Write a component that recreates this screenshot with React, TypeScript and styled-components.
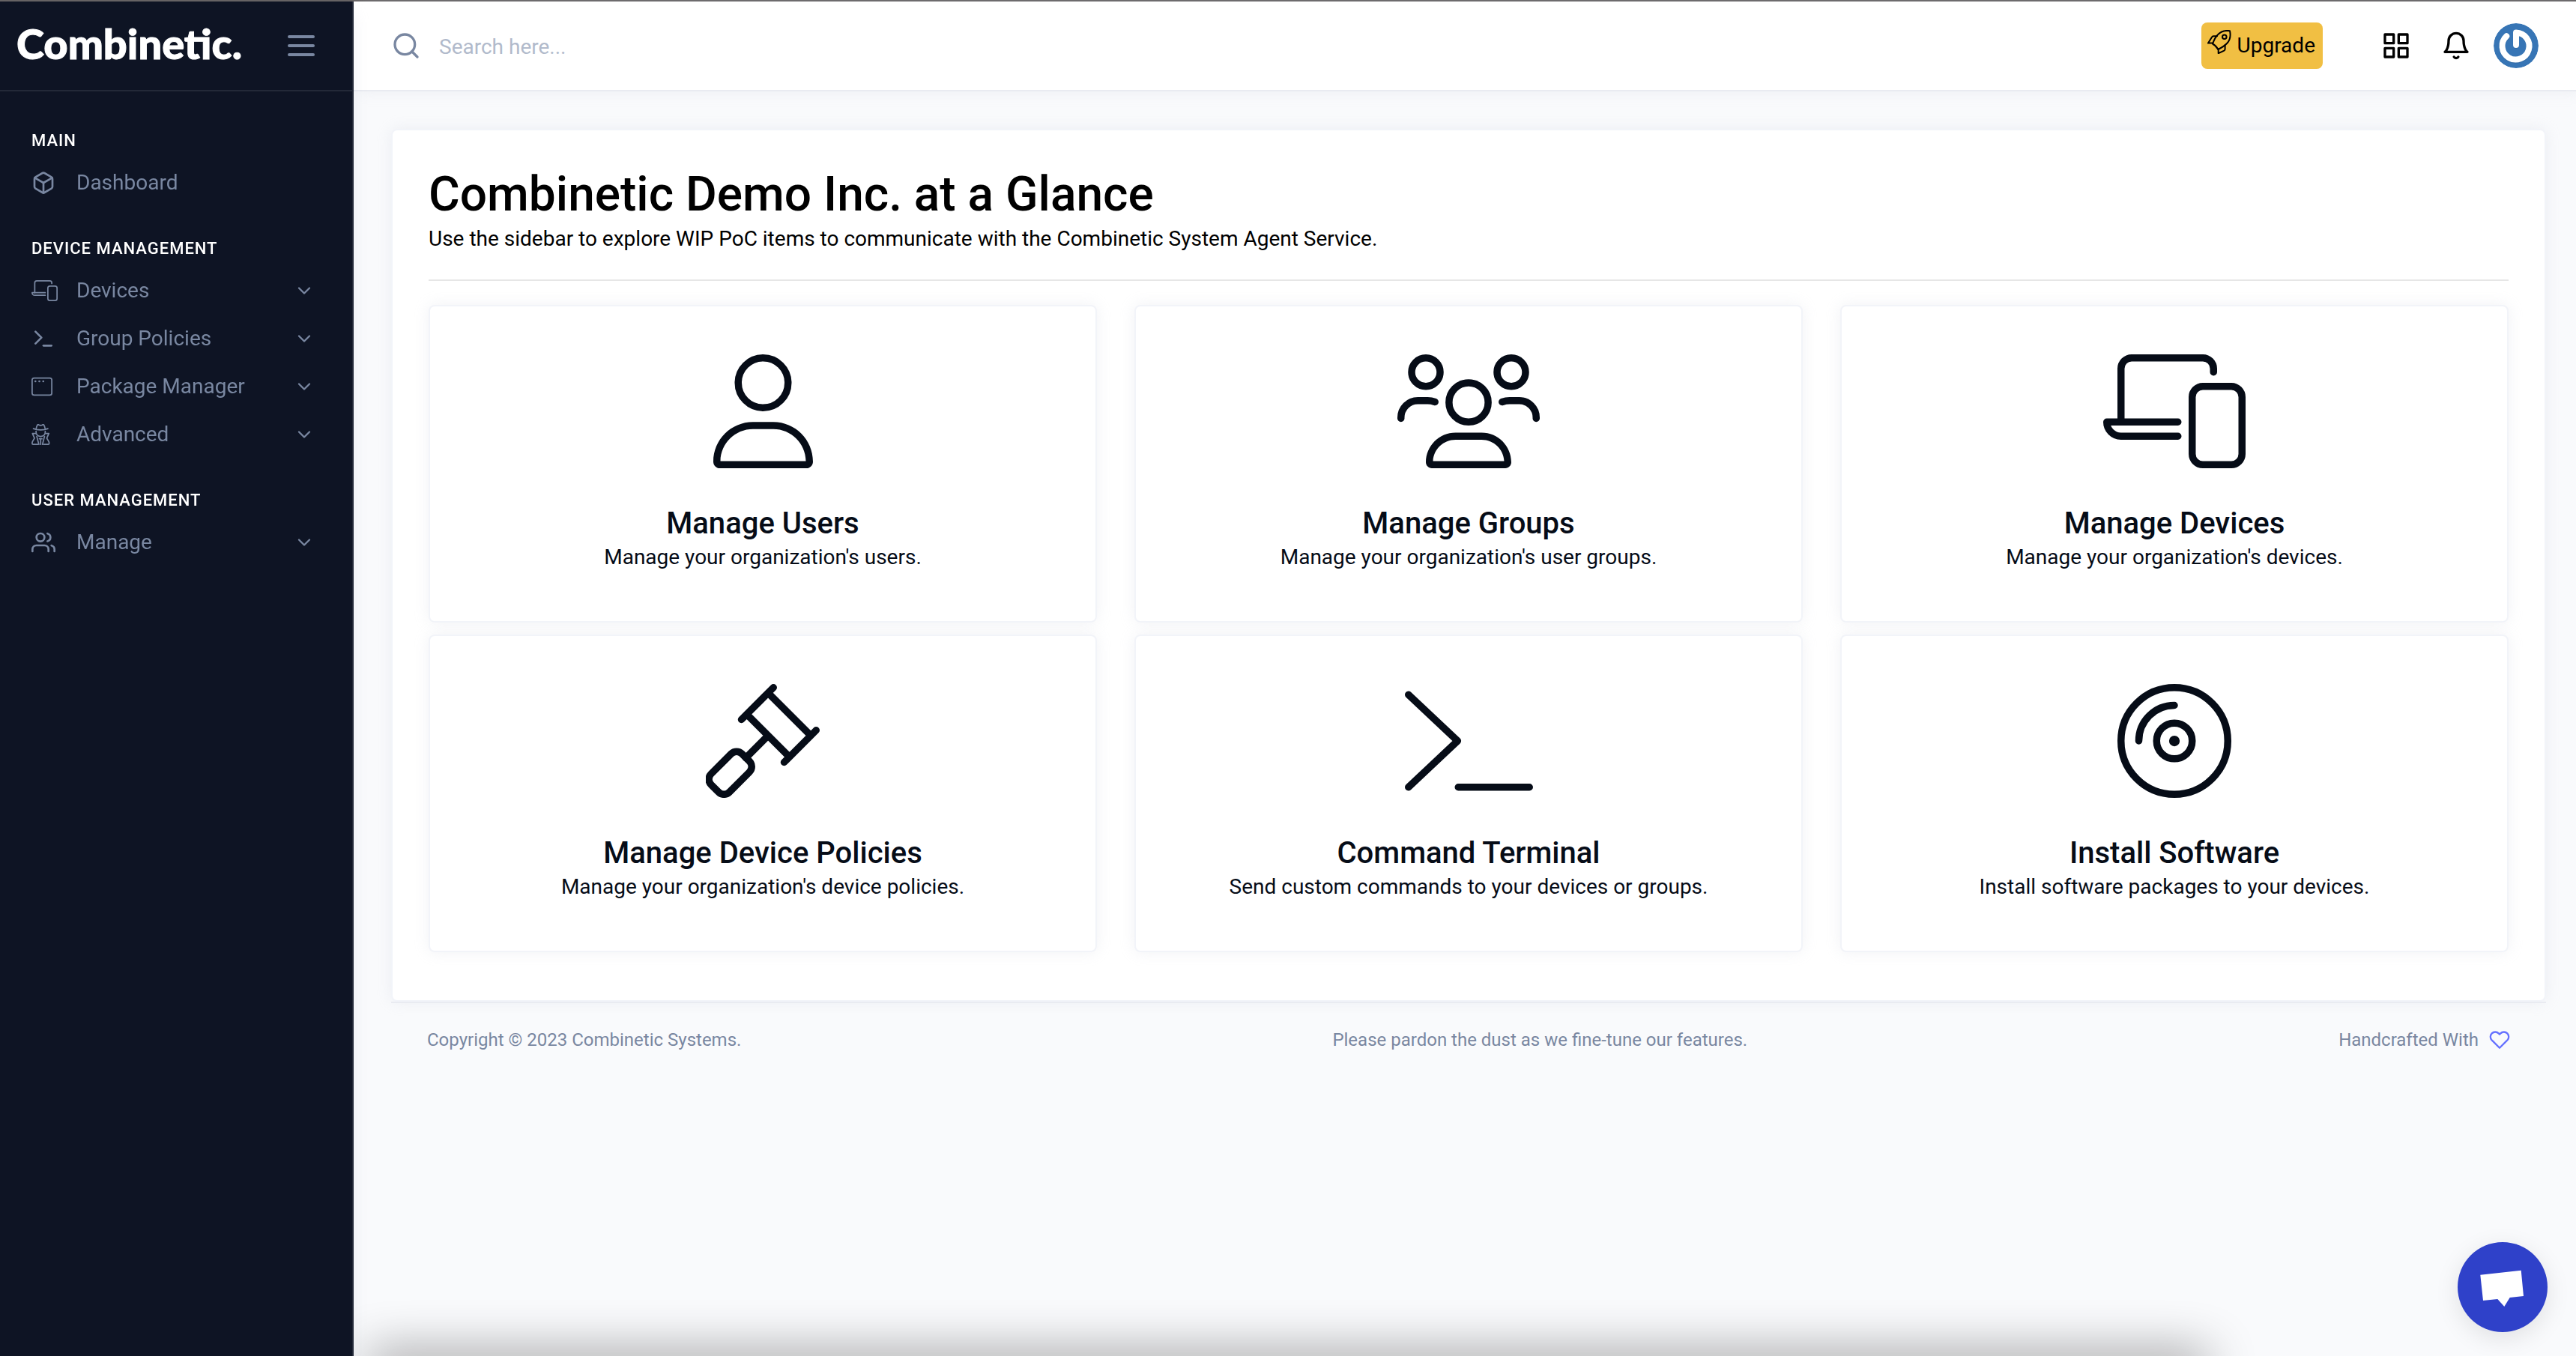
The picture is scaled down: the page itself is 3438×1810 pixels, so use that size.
import React from "react";
import styled, { createGlobalStyle } from "styled-components";
import {
  FiBell,
  FiBox,
  FiChevronDown,
  FiGrid,
  FiHeart,
  FiSearch,
  FiTerminal,
  FiUsers,
} from "react-icons/fi";

const color = {
  ink: "#060c17",
  navy: "#0e1424",
  navyLine: "#232938",
  muted: "#7987a1",
  page: "#f9fafc",
  line: "#e9ebf1",
  cardLine: "#f2f4f9",
  primary: "#6571ff",
  amber: "#f1bf43",
  chat: "#2f41c9",
};

const GlobalStyle = createGlobalStyle`
  *, *::before, *::after { box-sizing: border-box; }
  body {
    margin: 0;
    background: ${color.page};
    color: #000;
    font-family: Roboto, "Liberation Sans", sans-serif;
    font-size: 28px;
    line-height: 42px;
  }
  h1, h2, h3, p, ul { margin: 0; padding: 0; }
  ul { list-style: none; }
  a { color: inherit; text-decoration: none; }
  button { font: inherit; color: inherit; background: none; border: 0; padding: 0; cursor: pointer; }
  svg { display: block; flex: none; }
`;

const Shell = styled.div`
  display: flex;
  min-height: 100vh;
  border-top: 2px solid #666364;
`;

/* Sidebar */

const Sidebar = styled.aside`
  flex: none;
  z-index: 2;
  width: 472px;
  background: ${color.navy};
  border-right: 2px solid ${color.navyLine};
  box-shadow: 0 16px 20px 0 rgba(183, 192, 206, 0.2);
`;

const SidebarHeader = styled.div`
  display: flex;
  align-items: center;
  justify-content: space-between;
  height: 120px;
  padding: 0 50px 0 22px;
  border-bottom: 2px solid ${color.navyLine};
`;

const Brand = styled.a`
  padding-bottom: 6px;
  color: #fff;
  font-family: Lato, "Open Sans", sans-serif;
  font-size: 56px;
  font-weight: 900;
  line-height: 64px;
  -webkit-text-stroke: 1px #fff;
`;

const MenuToggle = styled.button`
  display: grid;
  gap: 8px;
  width: 36px;
`;

const ToggleBar = styled.span`
  height: 4px;
  border-radius: 2px;
  background: ${color.muted};
`;

const Nav = styled.nav`
  display: grid;
  gap: 40px;
  padding: 50px 50px 40px 42px;
`;

const NavHeading = styled.h2`
  margin-bottom: 8px;
  color: #fff;
  font-size: 22px;
  font-weight: 500;
  line-height: 32px;
  letter-spacing: 1px;
  text-transform: uppercase;
`;

const NavLink = styled.a`
  display: flex;
  align-items: center;
  height: 64px;
  color: ${color.muted};
`;

const NavIcon = styled.span`
  display: flex;
  align-items: center;
  width: 60px;
  height: 32px;
`;

const NavLabel = styled.span`
  flex: 1;
`;

/* Top bar */

const Main = styled.div`
  flex: 1;
  min-width: 0;
`;

const TopBar = styled.header`
  display: flex;
  align-items: center;
  height: 120px;
  padding: 0 50px;
  background: #fff;
  border-bottom: 2px solid ${color.line};
  box-shadow: 6px 0 20px 0 rgba(183, 192, 206, 0.2);
`;

const SearchBox = styled.label`
  display: flex;
  flex: 1;
  align-items: center;
  gap: 24px;
  color: ${color.muted};
`;

const SearchInput = styled.input`
  flex: 1;
  border: 0;
  outline: 0;
  padding: 4px 0 0;
  background: transparent;
  color: ${color.ink};
  font: inherit;
  &::placeholder { color: #b1bacb; opacity: 1; }
`;

const UpgradeButton = styled.button`
  display: flex;
  justify-content: center;
  gap: 8px;
  height: 62px;
  margin-right: 78px;
  padding: 10px 10px 0 8px;
  border-radius: 8px;
  background: ${color.amber};
`;

const Tools = styled.div`
  display: flex;
  align-items: center;
`;

const ToolButton = styled.button`
  margin-right: 40px;
  &:nth-of-type(2) { margin-right: 30px; }
`;

const Avatar = styled.button`
  overflow: hidden;
  border-radius: 50%;
`;

/* Content */

const Content = styled.main`
  padding: 50px 40px 0 50px;
`;

const Panel = styled.section`
  padding: 48px;
  padding-bottom: 64px;
  background: #fff;
  border: 2px solid ${color.cardLine};
  border-radius: 8px;
  box-shadow: 0 0 20px 0 rgba(183, 192, 206, 0.2);
`;

const PanelTitle = styled.h1`
  font-size: 64px;
  font-weight: 500;
  line-height: 76px;
`;

const Divider = styled.hr`
  height: 2px;
  margin: 33px 0 32px;
  border: 0;
  background: #e6e6e6;
`;

const CardGrid = styled.div`
  display: grid;
  grid-template-columns: repeat(3, 1fr);
  gap: 16px 50px;
`;

const Card = styled.a`
  display: flex;
  flex-direction: column;
  align-items: center;
  padding: 64px 32px;
  background: #fff;
  border: 2px solid ${color.cardLine};
  border-radius: 8px;
  box-shadow: 0 0 20px 0 rgba(183, 192, 206, 0.2);
  color: ${color.ink};
  text-align: center;
`;

const CardTitle = styled.h3`
  margin-top: 50px;
  font-size: 40px;
  font-weight: 500;
  line-height: 48px;
`;

const Footer = styled.footer`
  display: flex;
  align-items: center;
  justify-content: space-between;
  padding: 28px 48px;
  border-top: 2px solid ${color.line};
  color: ${color.muted};
  font-size: 24px;
`;

const Crafted = styled.span`
  display: flex;
  align-items: center;
  gap: 14px;
`;

const ChatButton = styled.button`
  position: fixed;
  right: 38px;
  bottom: 32px;
  z-index: 3;
  width: 120px;
  height: 120px;
  border-radius: 50%;
  background: ${color.chat};
  box-shadow: 0 8px 32px rgba(0, 0, 0, 0.1);
`;

const BottomShade = styled.div`
  position: fixed;
  left: 500px;
  right: 500px;
  bottom: -24px;
  z-index: 1;
  height: 20px;
  box-shadow: 0 0 64px 8px rgba(0, 0, 0, 0.45);
`;

/* Drawn icons, all on a 512-unit high grid */

type IconProps = { size: number };

const Stroked = ({ size, width, children }: IconProps & { width: number; children: React.ReactNode }) => (
  <svg
    width={(size * width) / 512}
    height={size}
    viewBox={`0 0 ${width} 512`}
    fill="none"
    stroke="currentColor"
    strokeWidth={32}
    strokeLinecap="round"
    strokeLinejoin="round"
    aria-hidden="true"
  >
    {children}
  </svg>
);

const UserIcon = ({ size }: IconProps) => (
  <Stroked size={size} width={448}>
    <circle cx="224" cy="128" r="112" />
    <path
      stroke="none"
      fill="currentColor"
      d="M32 480H416c-1.2-79.7-66.2-144-146.3-144H178.3c-80 0-145 64.3-146.3 144zM0 482.3C0 383.8 79.8 304 178.3 304h91.4C368.2 304 448 383.8 448 482.3c0 16.4-13.3 29.7-29.7 29.7H29.7C13.3 512 0 498.7 0 482.3z"
    />
  </Stroked>
);

const GroupIcon = ({ size }: IconProps) => (
  <Stroked size={size} width={640}>
    <circle cx="128" cy="80" r="64" />
    <circle cx="512" cy="80" r="64" />
    <circle cx="320" cy="216" r="88" />
    <path d="M16 288v-4c0-42 34-76 76-76h44c12 0 22 2 33 6M624 288v-4c0-42-34-76-76-76h-44c-12 0-22 2-33 6" />
    <path
      stroke="none"
      fill="currentColor"
      d="M128 485.3C128 411.7 187.7 352 261.3 352H378.7C452.3 352 512 411.7 512 485.3c0 14.7-11.9 26.7-26.7 26.7H154.7c-14.7 0-26.7-11.9-26.7-26.7zM160.1 480H479.9C477.1 426.5 432.9 384 378.7 384H261.3c-54.2 0-98.4 42.5-101.2 96z"
    />
  </Stroked>
);

const DevicesIcon = ({ size }: IconProps) => (
  <Stroked size={size} width={640}>
    <path d="M80 304V64a48 48 0 0 1 48-48H448a48 48 0 0 1 48 48V80" />
    <path d="M336 304H16a64 64 0 0 0 64 64H336" />
    <rect x="400" y="144" width="224" height="352" rx="48" />
  </Stroked>
);

const GavelIcon = ({ size }: IconProps) => (
  <Stroked size={size} width={512}>
    <path d="M304 16L160 160M496 208L352 352M280 40L472 232M184 136L376 328M280 232L180 332" />
    <rect x="52" y="302" width="116" height="196" rx="34" transform="rotate(45 110 400)" />
  </Stroked>
);

const PromptIcon = ({ size }: IconProps) => (
  <Stroked size={size} width={576}>
    <path d="M16 48L237 256L16 464M240 464H560" />
  </Stroked>
);

const DiscIcon = ({ size }: IconProps) => (
  <Stroked size={size} width={512}>
    <circle cx="256" cy="256" r="240" />
    <circle cx="256" cy="256" r="80" />
    <circle cx="256" cy="256" r="24" fill="currentColor" stroke="none" />
    <path d="M96 256A160 160 0 0 1 256 96" />
  </Stroked>
);

const WindowIcon = ({ size }: IconProps) => (
  <Stroked size={size} width={512}>
    <rect x="16" y="48" width="480" height="416" rx="48" />
    <g fill="currentColor" stroke="none">
      <circle cx="96" cy="128" r="24" />
      <circle cx="192" cy="128" r="24" />
      <circle cx="288" cy="128" r="24" />
    </g>
  </Stroked>
);

const AgentIcon = ({ size }: IconProps) => (
  <Stroked size={size} width={448}>
    <path d="M48 112c90 42 262 42 352 0M112 128c6-46 18-80 34-104 10-14 26-10 38-2 26 14 54 14 80 0 12-8 28-12 38 2 16 24 28 58 34 104" />
    <path d="M112 176v20c0 56 44 100 112 108 68-8 112-52 112-108v-20" />
    <path d="M96 232H24l50 112-46 80c-8 14-12 30-12 48 0 14 10 24 24 24h112M352 232h72l-50 112 46 80c8 14 12 30 12 48 0 14-10 24-24 24H296" />
    <path d="M130 304l50 192M318 304l-50 192M192 360h64M224 360v136" />
  </Stroked>
);

const RocketIcon = () => (
  <svg width="32" height="32" viewBox="0 0 32 32" fill="none" stroke="currentColor" strokeWidth="2" strokeLinecap="round" strokeLinejoin="round" aria-hidden="true">
    <path d="M30 1.2C31.500 8 30.500 13 26.500 17.500C23.500 20.800 19 23.600 14.300 26C12.500 22.500 10.500 20.300 7 18.500C8.800 13.500 11 9.200 14.200 6C18.500 1.500 23.500 .3 30 1.200Z" />
    <path d="M13 8.300H8.200C7 8.300 6.400 8.800 5.900 9.700L1 17.600H7.300M23.600 20V25.500C23.600 26.600 23.200 27.200 22.300 27.700L14.700 31.200V25.500" />
    <circle cx="22.800" cy="9.200" r="2.800" />
  </svg>
);

const AvatarMark = () => (
  <svg width="60" height="60" viewBox="-30 -30 60 60" aria-hidden="true">
    <circle r="30" fill="#3775b5" />
    <g fill="none" strokeWidth="8" strokeLinecap="round" strokeLinejoin="round">
      <path stroke="#2c5f96" opacity=".5" transform="translate(0 1)" d="M0-1V-17.500A18 18 0 1 1-12.700-12.700" />
      <path stroke="#fff" d="M0-1V-17.500A18 18 0 1 1-12.700-12.700" />
    </g>
  </svg>
);

const ChatMark = () => (
  <svg width="120" height="120" viewBox="0 0 120 120" fill="#fff" aria-hidden="true">
    <path d="M30.300 43.700L84.700 37.700L88 72L69.700 74L62.300 86L53.300 76L34 78Z" />
  </svg>
);

/* Data */

type NavItem = { label: string; icon: React.ReactNode; expandable?: boolean };

const sections: { title: string; items: NavItem[] }[] = [
  { title: "Main", items: [{ label: "Dashboard", icon: <FiBox size={32} /> }] },
  {
    title: "Device Management",
    items: [
      { label: "Devices", icon: <DevicesIcon size={28} />, expandable: true },
      { label: "Group Policies", icon: <FiTerminal size={32} />, expandable: true },
      { label: "Package Manager", icon: <WindowIcon size={28} />, expandable: true },
      { label: "Advanced", icon: <AgentIcon size={28} />, expandable: true },
    ],
  },
  { title: "User Management", items: [{ label: "Manage", icon: <FiUsers size={32} />, expandable: true }] },
];

const cards = [
  { title: "Manage Users", text: "Manage your organization's users.", Icon: UserIcon },
  { title: "Manage Groups", text: "Manage your organization's user groups.", Icon: GroupIcon },
  { title: "Manage Devices", text: "Manage your organization's devices.", Icon: DevicesIcon },
  { title: "Manage Device Policies", text: "Manage your organization's device policies.", Icon: GavelIcon },
  { title: "Command Terminal", text: "Send custom commands to your devices or groups.", Icon: PromptIcon },
  { title: "Install Software", text: "Install software packages to your devices.", Icon: DiscIcon },
];

export default function App() {
  return (
    <>
      <GlobalStyle />
      <Shell>
        <Sidebar>
          <SidebarHeader>
            <Brand href="#">Combinetic.</Brand>
            <MenuToggle type="button" aria-label="Toggle sidebar">
              <ToggleBar />
              <ToggleBar />
              <ToggleBar />
            </MenuToggle>
          </SidebarHeader>
          <Nav>
            {sections.map((section) => (
              <section key={section.title}>
                <NavHeading>{section.title}</NavHeading>
                <ul>
                  {section.items.map((item) => (
                    <li key={item.label}>
                      <NavLink href="#">
                        <NavIcon>{item.icon}</NavIcon>
                        <NavLabel>{item.label}</NavLabel>
                        {item.expandable && <FiChevronDown size={28} />}
                      </NavLink>
                    </li>
                  ))}
                </ul>
              </section>
            ))}
          </Nav>
        </Sidebar>
        <Main>
          <TopBar>
            <SearchBox>
              <FiSearch size={40} />
              <SearchInput type="text" placeholder="Search here..." aria-label="Search" />
            </SearchBox>
            <Tools>
              <UpgradeButton type="button">
                <RocketIcon />
                Upgrade
              </UpgradeButton>
            </Tools>
            <Tools>
              <ToolButton type="button" aria-label="Apps">
                <FiGrid size={40} />
              </ToolButton>
              <ToolButton type="button" aria-label="Notifications">
                <FiBell size={40} />
              </ToolButton>
              <Avatar type="button" aria-label="Profile">
                <AvatarMark />
              </Avatar>
            </Tools>
          </TopBar>
          <Content>
            <Panel>
              <PanelTitle>Combinetic Demo Inc. at a Glance</PanelTitle>
              <p>Use the sidebar to explore WIP PoC items to communicate with the Combinetic System Agent Service.</p>
              <Divider />
              <CardGrid>
                {cards.map(({ title, text, Icon }) => (
                  <Card key={title} href="#">
                    <Icon size={152} />
                    <CardTitle>{title}</CardTitle>
                    <p>{text}</p>
                  </Card>
                ))}
              </CardGrid>
            </Panel>
            <Footer>
              <span>Copyright © 2023 Combinetic Systems.</span>
              <span>Please pardon the dust as we fine-tune our features.</span>
              <Crafted>
                Handcrafted With
                <FiHeart size={28} color={color.primary} />
              </Crafted>
            </Footer>
          </Content>
        </Main>
      </Shell>
      <BottomShade />
      <ChatButton type="button" aria-label="Open chat">
        <ChatMark />
      </ChatButton>
    </>
  );
}
